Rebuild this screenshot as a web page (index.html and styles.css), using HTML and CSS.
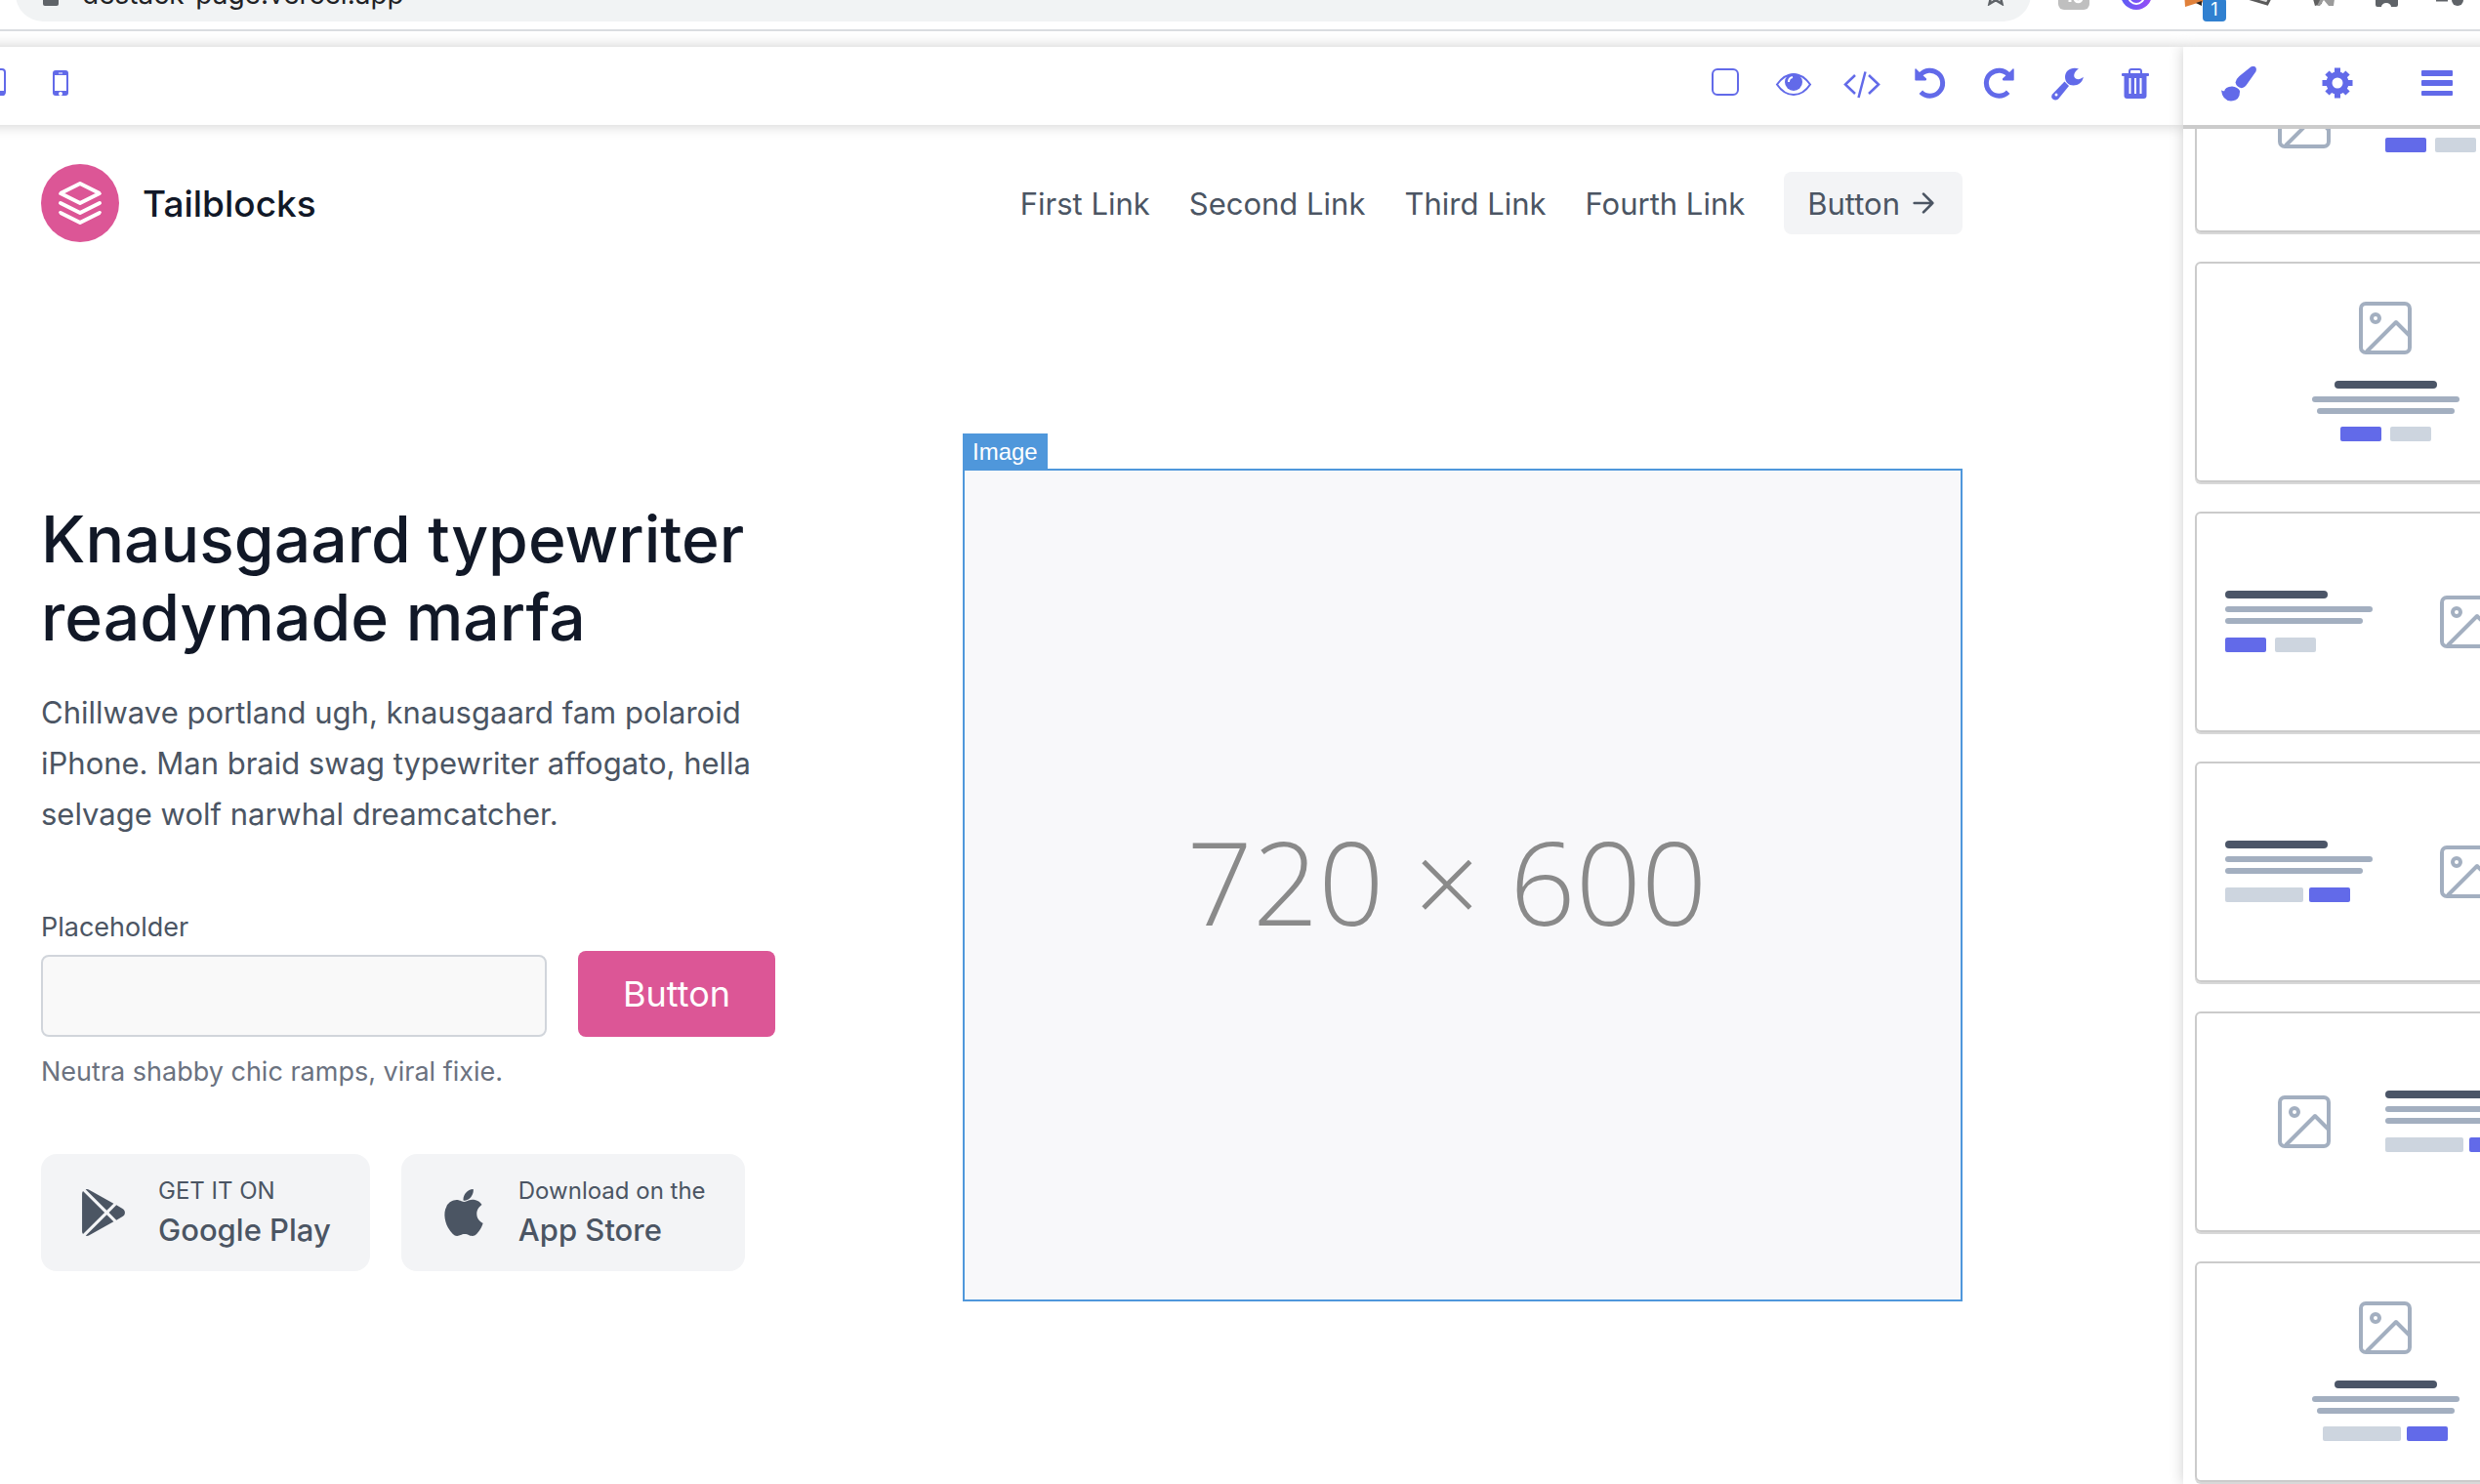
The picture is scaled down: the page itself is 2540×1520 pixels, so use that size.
FILE: index.html
```html
<!DOCTYPE html>
<html lang="en">
<head>
  <meta charset="UTF-8">
  <meta name="viewport" content="width=device-width, initial-scale=1.0">
  <title>Destack page editor</title>
  <link rel="stylesheet" href="styles.css">
</head>
<body>
<!-- Shapes shared by the block thumbnails -->
<svg class="defs" aria-hidden="true">
  <symbol id="picture" viewBox="0 0 54 54">
    <g fill="none" stroke="#a3afc0" stroke-width="4" stroke-linejoin="round">
      <rect x="2" y="2" width="50" height="50" rx="5"/>
      <circle cx="17" cy="17" r="4"/>
      <path d="M8 51L38 21l14 14"/>
    </g>
  </symbol>
  <symbol id="text-left" viewBox="0 0 151 34">
    <rect width="105" height="8" rx="4" fill="#4b5567"/>
    <rect y="16" width="151" height="6" rx="3" fill="#a3afc0"/>
    <rect y="28" width="141" height="6" rx="3" fill="#a3afc0"/>
  </symbol>
  <symbol id="text-center" viewBox="0 0 151 34">
    <rect x="23" width="105" height="8" rx="4" fill="#4b5567"/>
    <rect y="16" width="151" height="6" rx="3" fill="#a3afc0"/>
    <rect x="5" y="28" width="141" height="6" rx="3" fill="#a3afc0"/>
  </symbol>
  <symbol id="two-buttons" viewBox="0 0 93 15">
    <rect width="42" height="15" rx="2" fill="#626ae9"/>
    <rect x="51" width="42" height="15" rx="2" fill="#cdd5df"/>
  </symbol>
  <symbol id="field-button" viewBox="0 0 128 15">
    <rect width="80" height="15" rx="2" fill="#cdd5df"/>
    <rect x="86" width="42" height="15" rx="2" fill="#626ae9"/>
  </symbol>
</svg>

<!-- Browser bar -->
<div class="browser-bar">
  <div class="browser-row">
    <div class="address">
      <svg class="lock" viewBox="0 0 16 24"><path d="M4 11V7a4 4 0 0 1 8 0v4" fill="none" stroke="#5f6368" stroke-width="2"/><rect y="10" width="16" height="14" rx="2" fill="#5f6368"/></svg>
      <span>destack-page.vercel.app</span>
      <svg class="star" viewBox="0 0 24 24"><path d="M12 2l3 7 7.500.6-5.700 5 1.700 7.400-6.500-3.900L5.500 22l1.700-7.400-5.700-5L9 9z" fill="none" stroke="#5f6368" stroke-width="2.500"/></svg>
    </div>
    <div class="extensions">
      <svg viewBox="0 0 32 32"><rect width="32" height="32" rx="6" fill="#bfbfbf"/><path d="M12 18v6M17 20c0 5 7 5 7 0" fill="none" stroke="#fff" stroke-width="3"/></svg>
      <svg viewBox="0 0 32 32"><defs><linearGradient id="violet"><stop offset="0" stop-color="#5b5df5"/><stop offset="1" stop-color="#9a4cf6"/></linearGradient></defs><circle cx="16" cy="16" r="16" fill="url(#violet)"/><circle cx="16" cy="18" r="8" fill="none" stroke="#fff" stroke-width="2"/></svg>
      <div class="extension">
        <svg viewBox="0 0 32 32"><path d="M1 14h30l-4 13-9-3-16 5z" fill="#e0803a"/><path d="M13 25l6-2v5z" fill="#2b2320"/></svg>
        <span class="badge">1</span>
      </div>
      <svg viewBox="0 0 32 32"><path d="M2 20l20 6 6-12" fill="#ddd" stroke="#5a5a5a" stroke-width="3"/></svg>
      <svg viewBox="0 0 32 32"><path d="M3 14h12l-1 12-7 2z" fill="#606060"/><path d="M16 14h12l-2 14h-5l-5-6-4 6H9z" fill="#9b9b9b"/></svg>
      <svg viewBox="0 0 32 32"><path d="M5 8h23v19a2 2 0 0 1-2 2h-5a5 4 0 0 0-10 0H7a2 2 0 0 1-2-2z" fill="#5f6368"/></svg>
      <svg viewBox="0 0 32 32"><path d="M3 22h12" stroke="#5f6368" stroke-width="3"/><circle cx="25" cy="22" r="6" fill="#5f6368"/></svg>
    </div>
  </div>
</div>

<div class="editor">
  <div class="canvas">
    <!-- Editor toolbar -->
    <div class="toolbar">
      <div class="tools">
        <button class="tool" aria-label="Tablet"><svg viewBox="0 0 40 40"><rect x="7" y="3" width="26" height="26" rx="3" fill="none" stroke="currentColor" stroke-width="2"/><path d="M7 25h26v3a2 2 0 0 1-2 2H9a2 2 0 0 1-2-2z"/></svg></button>
        <button class="tool" aria-label="Phone"><svg viewBox="0 0 40 40"><rect x="12" y="4" width="16" height="26" rx="3"/><rect x="14" y="9" width="12" height="16" fill="#fff"/><path d="M18 7h4" stroke="#fff"/><circle cx="20" cy="28" r="2" fill="#fff"/></svg></button>
      </div>
      <div class="tools">
        <button class="tool" aria-label="Outline"><svg viewBox="0 0 40 40"><rect x="7" y="3" width="26" height="26" rx="5" fill="none" stroke="currentColor" stroke-width="2"/></svg></button>
        <button class="tool" aria-label="Preview"><svg viewBox="0 0 40 40"><path d="M3 18.500C8 11.500 14 8 20 8s12 3.500 17 10.500C32 26 26 29 20 29S8 26 3 18.500z" fill="none" stroke="currentColor" stroke-width="2"/><circle cx="20" cy="16" r="9"/><path d="M15 16a5 5 0 0 1 4-5" fill="none" stroke="#fff" stroke-width="2"/></svg></button>
        <button class="tool" aria-label="Code"><svg viewBox="0 0 40 40"><path d="M13 9L3 18.500 13 28M27 9l10 9.500L27 28M23.500 5.500L16.500 32" fill="none" stroke="currentColor" stroke-width="2.500"/></svg></button>
        <button class="tool" aria-label="Undo"><svg viewBox="0 0 40 40"><path d="M10.300 26.200A13 13 0 1 0 9.500 9" fill="none" stroke="currentColor" stroke-width="5" stroke-linejoin="round"/><path d="M4.500 2.500q.500-.5 1 0l3.500 3.500 7 6.500q.500 2-1 2H5q-.7 0-.7-.7V3z"/></svg></button>
        <button class="tool" aria-label="Redo"><svg viewBox="0 0 40 40"><path d="M29.700 26.200A13 13 0 1 1 30.500 9" fill="none" stroke="currentColor" stroke-width="5" stroke-linejoin="round"/><path d="M35.500 2.500q-.5-.5-1 0L31 6l-7 6.500q-.5 2 1 2h10q.7 0 .7-.7V3z"/></svg></button>
        <button class="tool" aria-label="Settings"><svg viewBox="0 0 40 40"><path d="M32 2.500C25 0 18 4 18 11c0 5 4 8.500 8.500 8.500 5 0 9.500-3 10.300-8.700-2.500 2.200-5.500 3-7.800 1.700-2.800-1.700-2.500-6.500 3-10z"/><path d="M17.500 15.500L22 20 11 33.500q-3 2-5.500 0t-.5-5z"/><circle cx="9" cy="29" r="1.500" fill="#fff"/></svg></button>
        <button class="tool" aria-label="Delete"><svg viewBox="0 0 40 40"><path d="M14 8V5q0-2 2-2h8q2 0 2 2v3" fill="none" stroke="currentColor" stroke-width="2"/><rect x="6" y="7" width="28" height="3" rx="1"/><path d="M8.500 9h23v21a3 3 0 0 1-3 3h-17a3 3 0 0 1-3-3z"/><path d="M14.500 12v16M20 12v16M25.500 12v16" stroke="#fff" stroke-width="2"/></svg></button>
      </div>
    </div>

    <!-- Page being edited -->
    <div class="page">
      <header class="site-header">
        <a class="brand" href="#">
          <svg class="logo" viewBox="0 0 24 24"><path d="M12 2L2 7l10 5 10-5-10-5zM2 17l10 5 10-5M2 12l10 5 10-5"/></svg>
          <span>Tailblocks</span>
        </a>
        <nav class="site-nav">
          <a href="#">First Link</a>
          <a href="#">Second Link</a>
          <a href="#">Third Link</a>
          <a href="#">Fourth Link</a>
          <button class="nav-button">Button <svg viewBox="0 0 24 24"><path d="M5 12h14M12 5l7 7-7 7"/></svg></button>
        </nav>
      </header>

      <section class="hero">
        <div class="hero-text">
          <h1>Knausgaard typewriter readymade marfa</h1>
          <p class="lead">Chillwave portland ugh, knausgaard fam polaroid iPhone. Man braid swag typewriter affogato, hella selvage wolf narwhal dreamcatcher.</p>
          <div class="form-row">
            <div class="field">
              <label for="hero-field">Placeholder</label>
              <input type="text" id="hero-field">
            </div>
            <button class="submit">Button</button>
          </div>
          <p class="hint">Neutra shabby chic ramps, viral fixie.</p>
          <div class="stores">
            <button class="store">
              <svg viewBox="0 0 512 512"><path d="M99.617 8.057a50.191 50.191 0 00-38.815-6.713l230.932 230.933 74.846-74.846L99.617 8.057zM32.139 20.116c-6.441 8.563-10.148 19.077-10.148 30.199v411.358c0 11.123 3.708 21.636 10.148 30.199l235.877-235.877L32.139 20.116zM464.261 212.087l-67.266-37.637-81.544 81.544 81.548 81.548 67.273-37.640c16.117-9.030 25.738-25.442 25.738-43.908s-9.621-34.877-25.749-43.907zM291.733 279.711L60.815 510.629c3.786.891 7.639 1.371 11.492 1.371a50.275 50.275 0 0027.310-8.070l266.965-149.372-74.849-74.847z"/></svg>
              <span class="store-text"><small>GET IT ON</small><strong>Google Play</strong></span>
            </button>
            <button class="store">
              <svg viewBox="0 0 305 305"><path d="M40.738 112.119c-25.785 44.745-9.393 112.648 19.121 153.820C74.092 286.523 88.502 305 108.239 305c.372 0 .745-.007 1.127-.022 9.273-.37 15.974-3.225 22.453-5.984 7.274-3.100 14.797-6.305 26.597-6.305 11.226 0 18.390 3.101 25.318 6.099 6.828 2.954 13.861 6.010 24.253 5.815 22.232-.414 35.882-20.352 47.925-37.941 12.567-18.365 18.871-36.196 20.998-43.010l.086-.271a2.500 2.500 0 00-1.372-3.054c-.148-.055-38.335-15.803-38.708-58.400-.335-35.736 25.379-54.553 31.400-58.448l.227-.147a2.500 2.500 0 00.664-3.514c-18.014-26.366-45.624-30.335-56.740-30.813-1.613-.161-3.278-.242-4.950-.242-13.056 0-25.563 4.931-35.611 8.893-6.936 2.735-12.927 5.097-17.059 5.097-4.643 0-10.668-2.391-17.645-5.159-9.330-3.703-19.905-7.899-31.100-7.899l-.817.007c-25.987.387-50.611 15.466-64.245 39.370z"/><path d="M212.101.002c-15.763.642-34.672 10.345-45.974 23.583-9.605 11.127-18.988 29.679-16.516 48.378a2.500 2.500 0 002.284 2.164c1.064.083 2.150.125 3.232.126 15.413 0 32.040-8.527 43.395-22.257 11.951-14.498 17.994-33.104 16.166-49.770A2.508 2.508 0 00212.101.002z"/></svg>
              <span class="store-text"><small>Download on the</small><strong>App Store</strong></span>
            </button>
          </div>
        </div>
        <div class="hero-image">
          <span class="selection-label">Image</span>
          <span>720 × 600</span>
        </div>
      </section>
    </div>
  </div>

  <!-- Blocks sidebar -->
  <aside class="sidebar">
    <div class="sidebar-tabs">
      <button class="tool" aria-label="Styles"><svg viewBox="0 0 40 40"><path d="M37 .7q1.500 1.500.5 4.500L28.500 18q-2.500 4-5.700 4.200-5.300-1-6.300-5.700.5-3.500 4-6.500L32 .8q3-1.800 5-.1z"/><path d="M13 20.500q6 .5 8 4.500.5 10-9 10.500Q3 35 2 24.300q1.500 1.500 3.200.9.500-4 7.800-4.700z"/></svg></button>
      <button class="tool" aria-label="Options"><svg viewBox="0 0 40 40"><circle cx="20" cy="17" r="8.500" fill="none" stroke="currentColor" stroke-width="6"/><path d="M20 7V1.500M20 27v5.500M10 17H4.500M30 17h5.500M13 10L9.500 6.500M27 10l3.500-3.500M13 24l-3.500 3.500M27 24l3.500 3.500" stroke="currentColor" stroke-width="6"/></svg></button>
      <button class="tool" aria-label="Layers"><svg viewBox="0 0 40 40"><rect x="4" y="4" width="32" height="6" rx="1"/><rect x="4" y="14" width="32" height="6" rx="1"/><rect x="4" y="25" width="32" height="5" rx="1"/></svg></button>
    </div>
    <div class="blocks">
      <div class="block-list">
        <button class="block" aria-label="Hero 1"><svg viewBox="0 0 386 222"><use href="#picture" x="83" y="84" width="54" height="54"/><use href="#text-left" x="193" y="79" width="151" height="34"/><use href="#two-buttons" x="193" y="127" width="93" height="15"/></svg></button>
        <button class="block" aria-label="Hero 2"><svg viewBox="0 0 386 222"><use href="#picture" x="166" y="39" width="54" height="54"/><use href="#text-center" x="118" y="120" width="151" height="34"/><use href="#two-buttons" x="147" y="167" width="93" height="15"/></svg></button>
        <button class="block" aria-label="Hero 3"><svg viewBox="0 0 386 222"><use href="#picture" x="249" y="84" width="54" height="54"/><use href="#text-left" x="29" y="79" width="151" height="34"/><use href="#two-buttons" x="29" y="127" width="93" height="15"/></svg></button>
        <button class="block" aria-label="Hero 4"><svg viewBox="0 0 386 222"><use href="#picture" x="249" y="84" width="54" height="54"/><use href="#text-left" x="29" y="79" width="151" height="34"/><use href="#field-button" x="29" y="127" width="128" height="15"/></svg></button>
        <button class="block" aria-label="Hero 5"><svg viewBox="0 0 386 222"><use href="#picture" x="83" y="84" width="54" height="54"/><use href="#text-left" x="193" y="79" width="151" height="34"/><use href="#field-button" x="193" y="127" width="128" height="15"/></svg></button>
        <button class="block" aria-label="Hero 6"><svg viewBox="0 0 386 222"><use href="#picture" x="166" y="39" width="54" height="54"/><use href="#text-center" x="118" y="120" width="151" height="34"/><use href="#field-button" x="129" y="167" width="128" height="15"/></svg></button>
      </div>
    </div>
  </aside>
</div>
</body>
</html>
```
FILE: styles.css
```css
* {
  margin: 0;
  padding: 0;
  box-sizing: border-box;
}

:root {
  --accent: #626ae9;
  --pink: #dc5696;
  --text: #4b5563;
  --heading: #111827;
  --light: #f3f4f6;
  --select: #4f97db;
  --line: #cbcbcb;
}

body {
  font-family: "Inter", "Liberation Sans", sans-serif;
  font-size: 31px;
  color: var(--text);
  background-color: #fff;
  height: 100vh;
  overflow: hidden;
  display: flex;
  flex-direction: column;
}

button {
  font: inherit;
  color: inherit;
  background: none;
  border: none;
  cursor: pointer;
}

a {
  color: inherit;
  text-decoration: none;
}

svg {
  display: block;
  flex-shrink: 0;
}

.defs {
  position: absolute;
  width: 0;
  height: 0;
}

/* Browser bar */
.browser-bar {
  height: 32px;
  border-bottom: 2px solid #dadce0;
  overflow: hidden;
  display: flex;
  align-items: flex-end;
  flex-shrink: 0;
}

.browser-row {
  flex: 1;
  display: flex;
  align-items: center;
  gap: 28px;
  padding: 0 16px 8px;
}

.address {
  flex: 1;
  height: 56px;
  padding: 0 24px 0 28px;
  border-radius: 28px;
  background-color: #f1f3f4;
  color: #202124;
  font-size: 28px;
  display: flex;
  align-items: center;
  gap: 24px;
}

.lock {
  width: 16px;
  height: 24px;
}

.star {
  width: 24px;
  height: 24px;
  margin-left: auto;
}

.extensions {
  display: flex;
  gap: 32px;
}

.extensions svg {
  width: 32px;
  height: 32px;
}

.extension {
  position: relative;
}

.badge {
  position: absolute;
  left: 20px;
  bottom: -12px;
  width: 24px;
  border-radius: 4px;
  background-color: #3080d0;
  color: #fff;
  font-size: 18px;
  line-height: 24px;
  text-align: center;
}

/* Editor */
.editor {
  flex: 1;
  min-height: 0;
  margin-top: 16px;
  margin-right: -110px;
  display: flex;
}

.canvas {
  flex: 1;
  background-color: #fff;
}

.toolbar {
  height: 80px;
  padding: 20px 29px 0 0;
  margin-left: -28px;
  display: flex;
  justify-content: space-between;
  box-shadow: 0 0 14px rgba(0, 0, 0, 0.2);
}

.tools {
  display: flex;
  gap: 30px;
}

.tool {
  width: 40px;
  height: 40px;
  color: var(--accent);
}

.tool svg {
  width: 40px;
  height: 40px;
  fill: currentColor;
}

/* Page */
.page {
  padding: 0 226px 0 42px;
}

.site-header {
  padding: 40px 0;
  display: flex;
  justify-content: space-between;
  align-items: center;
}

.brand {
  display: flex;
  align-items: center;
  gap: 24px;
  color: var(--heading);
  font-size: 37px;
  font-weight: 500;
}

.logo {
  width: 80px;
  height: 80px;
  padding: 16px;
  border-radius: 50%;
  background-color: var(--pink);
  fill: none;
  stroke: #fff;
  stroke-width: 2;
  stroke-linecap: round;
  stroke-linejoin: round;
}

.site-nav {
  display: flex;
  align-items: center;
  gap: 40px;
}

.nav-button {
  height: 64px;
  padding: 0 24px;
  border-radius: 8px;
  background-color: var(--light);
  display: flex;
  align-items: center;
  gap: 8px;
}

.nav-button svg {
  width: 32px;
  height: 32px;
  fill: none;
  stroke: currentColor;
  stroke-width: 2;
  stroke-linecap: round;
  stroke-linejoin: round;
}

/* Hero */
.hero {
  padding: 192px 0;
  display: grid;
  grid-template-columns: 59fr 64fr;
  align-items: center;
}

.hero-text {
  padding-right: 192px;
}

h1 {
  margin-bottom: 32px;
  color: var(--heading);
  font-size: 66px;
  font-weight: 500;
  line-height: 80px;
}

.lead {
  margin-bottom: 64px;
  line-height: 52px;
}

.form-row {
  display: flex;
  align-items: flex-end;
  gap: 32px;
}

.field {
  flex: 1;
  font-size: 27px;
}

.field label {
  display: block;
  margin-bottom: 2px;
  line-height: 52px;
}

.field input {
  display: block;
  width: 100%;
  height: 84px;
  padding: 0 24px;
  border: 2px solid #d1d5db;
  border-radius: 8px;
  background-color: #f9f9f9;
  font: inherit;
  outline: none;
}

.submit {
  height: 88px;
  padding: 0 46px;
  border-radius: 8px;
  background-color: var(--pink);
  color: #fff;
  font-size: 36px;
}

.hint {
  margin: 16px 0 64px;
  color: #6b7280;
  font-size: 27px;
  line-height: 40px;
}

.stores {
  display: flex;
  gap: 32px;
}

.store {
  height: 120px;
  padding: 0 40px;
  border-radius: 16px;
  background-color: var(--light);
  display: flex;
  align-items: center;
  gap: 32px;
  text-align: left;
}

.store svg {
  width: 48px;
  height: 48px;
  fill: currentColor;
}

.store-text {
  display: flex;
  flex-direction: column;
}

.store small {
  font-size: 24px;
  line-height: 36px;
}

.store strong {
  font-weight: 500;
  line-height: 44px;
}

.hero-image {
  position: relative;
  aspect-ratio: 6 / 5;
  padding: 0 32px 8px 0;
  border: 2px solid var(--select);
  background-color: #f8f8fa;
  color: #8a8a8a;
  font-family: "Open Sans", "Noto Sans", sans-serif;
  font-size: 118px;
  font-weight: 300;
  display: flex;
  align-items: center;
  justify-content: center;
}

.selection-label {
  position: absolute;
  left: -2px;
  bottom: 100%;
  padding: 0 10px;
  background-color: var(--select);
  color: #fff;
  font-family: "Liberation Sans", sans-serif;
  font-size: 24px;
  font-weight: 400;
  line-height: 38px;
}

/* Sidebar */
.sidebar {
  position: relative;
  flex: 0 0 414px;
  background-color: #fff;
  display: flex;
  flex-direction: column;
  box-shadow: 0 0 14px rgba(0, 0, 0, 0.2);
}

.sidebar-tabs {
  height: 84px;
  padding: 20px 2px 0 6px;
  border-bottom: 4px solid var(--line);
  display: grid;
  grid-template-columns: repeat(4, 1fr);
  justify-items: center;
}

.blocks {
  flex: 1;
  min-height: 0;
  padding: 0 12px;
  overflow: hidden;
}

/* List is scrolled part of the way down */
.block-list {
  margin-top: -120px;
  display: flex;
  flex-direction: column;
  gap: 30px;
}

.block {
  border: 2px solid var(--line);
  border-radius: 6px;
  box-shadow: 0 2px 0 #d8d8d8;
}

.block svg {
  width: 100%;
}
```
